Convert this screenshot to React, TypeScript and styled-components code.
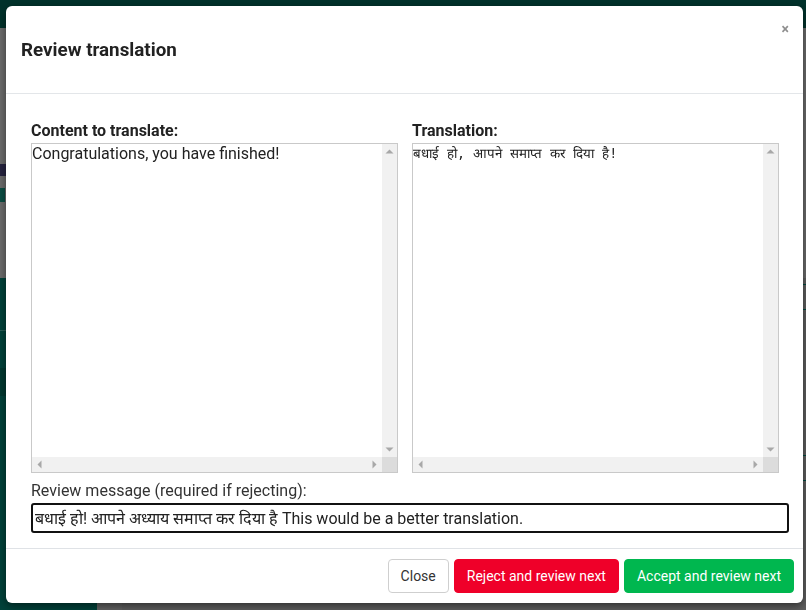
import React from "react";
import styled, { createGlobalStyle } from "styled-components";

const Global = createGlobalStyle`
  html, body { margin: 0; padding: 0; }
  body { font-family: Roboto, "Liberation Sans", sans-serif; overflow: hidden; }
  * { box-sizing: border-box; }
`;

const Page = styled.div`
  position: fixed;
  inset: 0;
  display: flex;
  flex-direction: column;
  background: #676767;
`;

const TopBar = styled.div`
  height: 28px;
  background: #00322b;
  flex-shrink: 0;
`;

const Hero = styled.div`
  height: 250px;
  background: #6c6c6c;
  padding-top: 136px;
  display: flex;
  flex-direction: column;
  gap: 12px;
  flex-shrink: 0;
`;

const HeroMark = styled.div<{ $w: number; $h: number; $c: string }>`
  width: ${(p) => p.$w}px;
  height: ${(p) => p.$h}px;
  background: ${(p) => p.$c};
`;

const Lower = styled.div`
  flex: 1;
  display: flex;
`;

const Sidebar = styled.div`
  width: 97px;
  background: #00423a;
  display: flex;
  flex-direction: column;
  padding-top: 52px;
`;

const SideLine = styled.div`
  height: 1px;
  background: #2a5e57;
`;

const SideItem = styled.div`
  height: 28px;
  margin-top: 37px;
  background: #003830;
`;

const MainArea = styled.div`
  flex: 1;
  background: #5f5f5f;
  border-left: 25px solid #636363;
  display: flex;
  flex-direction: column;
  align-items: flex-end;
  padding-top: 6px;
  gap: 145px;
`;

const EdgeBox = styled.div`
  width: 8px;
  height: 26px;
  border: 1px solid #00483e;
  margin-right: -4px;
`;

const Modal = styled.div`
  position: absolute;
  top: 6px;
  left: 6px;
  width: 797px;
  background: #fff;
  border-radius: 6px;
  box-shadow: 0 3px 9px rgba(0, 0, 0, 0.5);
  display: flex;
  flex-direction: column;
`;

const Header = styled.div`
  height: 88px;
  border-bottom: 1px solid #e3e6e9;
  display: flex;
  align-items: center;
  padding: 0 15px;
  position: relative;
`;

const Title = styled.h5`
  margin: 0;
  font-size: 18.8px;
  font-weight: 700;
  color: #222;
`;

const CloseX = styled.button`
  position: absolute;
  top: 14px;
  right: 14px;
  border: none;
  background: none;
  padding: 0;
  font-family: Roboto, sans-serif;
  font-size: 14px;
  font-weight: 700;
  line-height: 18px;
  color: #8f8f8f;
  cursor: pointer;
`;

const Body = styled.div`
  padding: 27px 14px 15px 25px;
  display: flex;
  flex-direction: column;
`;

const Columns = styled.div`
  display: grid;
  grid-template-columns: 381px 1fr;
`;

const Field = styled.div`
  display: flex;
  flex-direction: column;
`;

const Label = styled.label<{ $bold?: boolean }>`
  font-size: 16px;
  line-height: 19px;
  font-weight: ${(p) => (p.$bold ? 700 : 400)};
  color: ${(p) => (p.$bold ? "#222" : "#333")};
  margin-bottom: 3px;
`;

const ScrollFrame = styled.div`
  width: 367px;
  height: 330px;
  border: 1px solid #c9c9c9;
  display: grid;
  grid-template-columns: 1fr 15px;
  grid-template-rows: 1fr 15px;
  background: #fff;
`;

const Area = styled.textarea<{ $mono?: boolean }>`
  border: none;
  padding: 0 1px 0 0;
  margin: 0;
  resize: none;
  overflow: hidden;
  white-space: pre;
  font-family: ${(p) => (p.$mono ? "monospace" : "Roboto, sans-serif")};
  font-size: ${(p) => (p.$mono ? "13.33px" : "16px")};
  color: #222;
  background: #fff;
  outline: none;
  width: 100%;
  height: 100%;
`;

const Track = styled.div<{ $dir: "v" | "h" }>`
  background: #f1f1f1;
  display: flex;
  flex-direction: ${(p) => (p.$dir === "v" ? "column" : "row")};
  justify-content: space-between;
`;

const ArrowBtn = styled.div`
  width: 15px;
  height: 15px;
  display: flex;
  align-items: center;
  justify-content: center;
`;

const Corner = styled.div`
  background: #dcdcdc;
`;

const arrowPoints: Record<string, string> = {
  up: "3.5,9.5 11.5,9.5 7.5,5.5",
  down: "3.5,5.5 11.5,5.5 7.5,9.5",
  left: "9.5,3.5 9.5,11.5 5.5,7.5",
  right: "5.5,3.5 5.5,11.5 9.5,7.5",
};

function Arrow({ dir }: { dir: "up" | "down" | "left" | "right" }) {
  return (
    <ArrowBtn>
      <svg width="15" height="15" viewBox="0 0 15 15">
        <polygon points={arrowPoints[dir]} fill="#a8a8a8" />
      </svg>
    </ArrowBtn>
  );
}

function ScrollArea({ value, mono }: { value: string; mono?: boolean }) {
  return (
    <ScrollFrame>
      <Area $mono={mono} readOnly value={value} />
      <Track $dir="v">
        <Arrow dir="up" />
        <Arrow dir="down" />
      </Track>
      <Track $dir="h">
        <Arrow dir="left" />
        <Arrow dir="right" />
      </Track>
      <Corner />
    </ScrollFrame>
  );
}

const MessageBlock = styled.div`
  display: flex;
  flex-direction: column;
  margin-top: 8px;
`;

const MessageInput = styled.input`
  width: 758px;
  height: 30px;
  border: 2px solid #111;
  border-radius: 3px;
  padding: 0 2px;
  font-family: Roboto, sans-serif;
  font-size: 16px;
  color: #222;
  outline: none;
`;

const Footer = styled.div`
  border-top: 1px solid #dfe2e6;
  display: flex;
  justify-content: flex-end;
  gap: 5px;
  padding: 10px 9px 10px 0;
`;

const Button = styled.button<{ $variant: "close" | "reject" | "accept" }>`
  height: 34px;
  padding: 0 12px;
  font-family: Roboto, sans-serif;
  font-size: 14px;
  border-radius: 4px;
  cursor: pointer;
  border: 1px solid
    ${(p) => (p.$variant === "close" ? "#cfcfcf" : p.$variant === "reject" ? "#ef0029" : "#00b74f")};
  background: ${(p) => (p.$variant === "close" ? "#fff" : p.$variant === "reject" ? "#ef0029" : "#00b74f")};
  color: ${(p) => (p.$variant === "close" ? "#333" : "#fff")};
`;

export default function App() {
  return (
    <>
      <Global />
      <Page>
        <TopBar />
        <Hero>
          <HeroMark $w={6} $h={12} $c="#25233f" />
          <HeroMark $w={5} $h={14} $c="#0b4e44" />
        </Hero>
        <Lower>
          <Sidebar>
            <SideLine />
            <SideItem />
          </Sidebar>
          <MainArea>
            <EdgeBox />
            <EdgeBox />
            <EdgeBox />
          </MainArea>
        </Lower>
      </Page>
      <Modal role="dialog">
        <Header>
          <Title>Review translation</Title>
          <CloseX aria-label="Close">×</CloseX>
        </Header>
        <Body>
          <Columns>
            <Field>
              <Label $bold>Content to translate:</Label>
              <ScrollArea value="Congratulations, you have finished!" />
            </Field>
            <Field>
              <Label $bold>Translation:</Label>
              <ScrollArea mono value="बधाई हो, आपने समाप्त कर दिया है!" />
            </Field>
          </Columns>
          <MessageBlock>
            <Label>Review message (required if rejecting):</Label>
            <MessageInput defaultValue="बधाई हो! आपने अध्याय समाप्त कर दिया है This would be a better translation." />
          </MessageBlock>
        </Body>
        <Footer>
          <Button $variant="close">Close</Button>
          <Button $variant="reject">Reject and review next</Button>
          <Button $variant="accept">Accept and review next</Button>
        </Footer>
      </Modal>
    </>
  );
}
